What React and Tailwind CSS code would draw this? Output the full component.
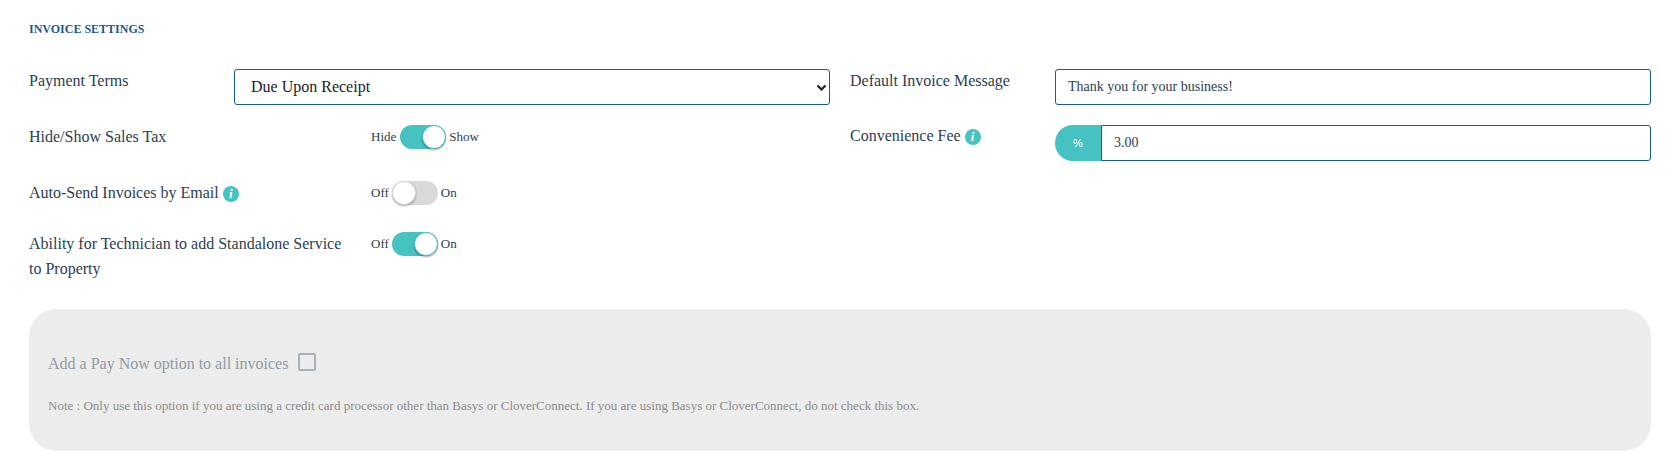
const serif = "font-['Liberation_Serif','Times_New_Roman',serif]";

function InfoIcon() {
  return (
    <span className="ml-[4px] inline-flex h-[16px] w-[16px] items-center justify-center rounded-full bg-[#46c2c2] align-[0px] text-[13px] leading-none font-bold italic text-white">
      i
    </span>
  );
}

function Toggle({ on, left, right, wide }) {
  return (
    <div className="flex h-[24px] items-center text-[13px] text-[#2c3e50]">
      <span className={wide ? 'mr-[4px]' : 'mr-[3px]'}>{left}</span>
      <div className={`flex h-[24px] w-[46px] rounded-full ${on ? 'justify-end bg-[#46c2c2]' : 'justify-start bg-[#d9d9d9]'}`}>
        <div className={`h-[24px] w-[24px] rounded-full bg-white shadow-[0_1px_2px_rgba(0,0,0,0.35)] ${on ? 'border border-[#46c2c2]' : 'border border-[#d9d9d9]'}`} />
      </div>
      <span className="ml-[3px]">{right}</span>
    </div>
  );
}

function Row({ label, info, left, right, on, wide, className }) {
  return (
    <div className={`grid grid-cols-[342px_1fr] ${className}`}>
      <div className="-mt-[1px] pr-[20px] text-[16px] leading-[25px] text-[#2c3e50]">
        {label}
        {info && <InfoIcon />}
      </div>
      <Toggle on={on} left={left} right={right} wide={wide} />
    </div>
  );
}

export default function App() {
  return (
    <div className={`${serif} h-[474px] w-full bg-white pt-[23px] pr-[27px] pl-[29px]`}>
      <h2 className="text-[12px] leading-[13px] font-bold text-[#1b5a8e] uppercase">Invoice Settings</h2>

      <div className="mt-[33px] grid grid-cols-2 gap-x-[20px]">
        <div>
          <div className="grid grid-cols-[205px_1fr]">
            <label className="text-[16px] leading-[24px] text-[#2c3e50]">Payment Terms</label>
            <div className="relative">
              <select
                defaultValue="due"
                className="h-[36px] w-full appearance-none rounded-[3px] border border-[#1b5a8e] bg-white pl-[16px] text-[16px] text-[#222]"
              >
                <option value="due">Due Upon Receipt</option>
              </select>
              <svg className="pointer-events-none absolute top-[15px] right-[3px] h-[7px] w-[11px]" viewBox="0 0 11 7" fill="none" stroke="#222" strokeWidth="2.2">
                <path d="M1.5 1.5 5.5 5.5 9.5 1.5" />
              </svg>
            </div>
          </div>
          <Row label="Hide/Show Sales Tax" left="Hide" right="Show" on wide className="mt-[20px] h-[36px]" />
          <Row label="Auto-Send Invoices by Email" info left="Off" right="On" className="mt-[20px]" />
          <Row label="Ability for Technician to add Standalone Service to Property" left="Off" right="On" on className="mt-[27px]" />
        </div>

        <div>
          <div className="grid grid-cols-[205px_1fr]">
            <label className="text-[16px] leading-[24px] text-[#2c3e50]">Default Invoice Message</label>
            <input
              readOnly
              value="Thank you for your business!"
              className="h-[36px] w-full rounded-[3px] border border-[#1b5a8e] bg-white pl-[12px] text-[14px] text-[#2c3e50]"
            />
          </div>
          <div className="mt-[20px] grid grid-cols-[205px_1fr]">
            <label className="text-[16px] leading-[22px] text-[#2c3e50]">
              Convenience Fee
              <InfoIcon />
            </label>
            <div className="flex h-[36px]">
              <div className="flex w-[46px] items-center justify-center rounded-l-full bg-[#46c2c2] font-['Liberation_Sans',sans-serif] text-[11px] text-white">
                %
              </div>
              <input
                readOnly
                value="3.00"
                className="h-[36px] min-w-0 flex-1 rounded-r-[3px] border border-[#1b5a8e] bg-white pl-[12px] text-[14px] text-[#2c3e50]"
              />
            </div>
          </div>
        </div>
      </div>

      <div className="mt-[28px] h-[142px] rounded-[28px] bg-[#ececec] px-[19px] pt-[43px]">
        <div className="flex items-center text-[16px] leading-[24px] text-[#8f9ba5]">
          <span>Add a Pay Now option to all invoices</span>
          <span className="mb-[4px] ml-[10px] h-[18px] w-[18px] rounded-[2px] border-2 border-[#a5b1bb]" />
        </div>
        <p className="mt-[22px] text-[13px] leading-[16px] text-[#8c8c8c]">
          Note : Only use this option if you are using a credit card processor other than Basys or CloverConnect. If you are using Basys or CloverConnect, do not check this box.
        </p>
      </div>
    </div>
  );
}
